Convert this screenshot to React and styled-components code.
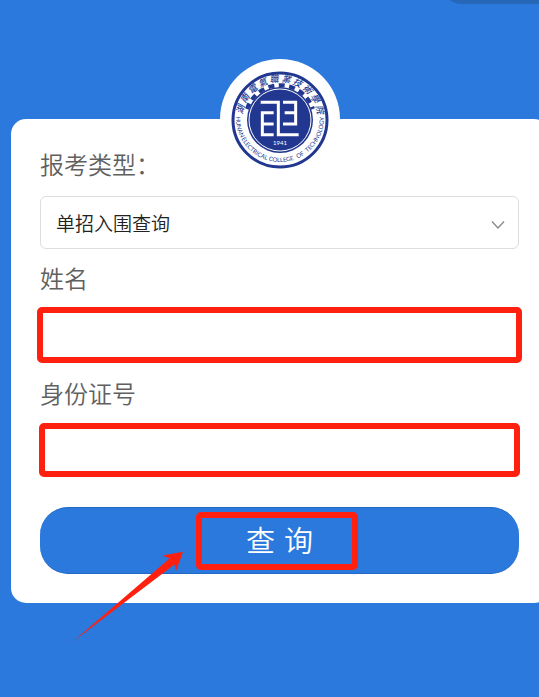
import React, { useState } from "react";
import styled, { createGlobalStyle } from "styled-components";

const blue = "#2b79dc";
const red = "#ff2010";
const navy = "#22378f";

const GlobalStyle = createGlobalStyle`
  *, *::before, *::after { box-sizing: border-box; }
  body {
    margin: 0;
    background: ${blue};
    font-family: "Noto Sans CJK SC", sans-serif;
  }
  button, input, select { font-family: inherit; }
`;

const Page = styled.main`
  position: relative;
  display: flow-root;
  min-height: 100vh;
  overflow: hidden;
  background: ${blue};
`;

const Capsule = styled.div`
  position: absolute;
  top: -38px;
  right: -30px;
  width: 128px;
  height: 42px;
  border-radius: 21px;
  background: #2767b8;
`;

const Card = styled.section`
  position: relative;
  margin: 119px -10px 94px 11px;
  padding: 27px 30px 29px 29px;
  border-radius: 15px;
  background: #fff;
`;

const Badge = styled.div`
  position: absolute;
  top: -60px;
  left: 50%;
  width: 120px;
  height: 120px;
  margin-left: -60px;
  border-radius: 50%;
  background: #fff;

  svg { display: block; }
`;

const Form = styled.form`
  display: flex;
  flex-direction: column;
`;

const Label = styled.label`
  height: 36px;
  color: #606060;
  font-size: 24px;
  font-weight: 350;
  line-height: 36px;
`;

const SelectBox = styled.div`
  position: relative;
  margin: 14px 0 11px;

  svg {
    position: absolute;
    top: 24px;
    right: 14px;
    pointer-events: none;
  }
`;

const Select = styled.select`
  display: block;
  width: 100%;
  height: 53px;
  padding: 0 40px 0 15px;
  border: 1px solid #ddd;
  border-radius: 6px;
  background: #fff;
  color: #222;
  font-size: 19px;
  font-weight: 350;
  appearance: none;
`;

const Input = styled.input`
  height: ${(p) => (p.$wide ? "56px" : "54px")};
  margin: ${(p) => (p.$wide ? "11px -3px 12px" : "12px -1px 30px")};
  padding: 0 12px;
  border: 6px solid ${red};
  border-radius: 5px;
  outline: none;
  background: #fff;
  font-size: 19px;
`;

const Submit = styled.button`
  position: relative;
  height: 67px;
  padding: 3px 0 0;
  border: 1px solid #2268c6;
  border-width: 1px 0;
  border-radius: 28px;
  background: ${blue};
  color: #fff;
  font-family: "DejaVu Sans", "Noto Sans CJK SC", sans-serif;
  font-size: 29px;
  font-weight: 350;
  line-height: 44px;
`;

const Highlight = styled.span`
  position: absolute;
  top: 4px;
  left: 50%;
  width: 162px;
  height: 58px;
  margin-left: -84px;
  border: 6px solid ${red};
  border-radius: 5px;
`;

const Arrow = styled.svg`
  position: absolute;
  bottom: -40px;
  left: 60px;
  pointer-events: none;
`;

const SealText = styled.text`
  fill: ${navy};
  font-family: ${(p) => (p.$latin ? '"Lato", sans-serif' : '"Noto Sans CJK TC", serif')};
  font-size: ${(p) => (p.$latin ? "6px" : "9px")};
  font-weight: ${(p) => (p.$latin ? 400 : 500)};
  font-style: ${(p) => (p.$latin ? "normal" : "italic")};
`;

const YearText = styled.text`
  fill: #fff;
  font-family: "Lato", sans-serif;
  font-size: 6px;
`;

const sealName = [..."湖南電氣職業技術學院"];

const sealWords = [
  ["HUNAN", "7%"],
  ["ELECTRICAL", "28%"],
  ["COLLEGE", "51%"],
  ["OF", "66%"],
  ["TECHNOLOGY", "86%"],
];

function Seal() {
  return (
    <svg width="120" height="120" viewBox="0 0 120 120" role="img" aria-label="湖南電氣職業技術學院">
      <circle cx="60" cy="61" r="47" fill="#fff" stroke={navy} strokeWidth="3" />
      <circle cx="60" cy="61" r="33" fill={navy} />
      <circle cx="60" cy="61" r="31" fill="none" stroke="#fff" strokeWidth="1" />
      <path d="M27 50A34.800 34.800 0 0 1 93 50" fill="none" stroke={navy} strokeWidth="4" strokeDasharray="6 4.500" />
      {sealName.map((char, i) => (
        <SealText key={char} x="60" y="23" textAnchor="middle" transform={`rotate(${-75 + i * 16.7} 60 61)`}>
          {char}
        </SealText>
      ))}
      <path id="seal-arc" d="M16 59A44 44 0 1 0 104 59" fill="none" />
      {sealWords.map(([word, offset]) => (
        <SealText key={word} $latin textAnchor="middle">
          <textPath href="#seal-arc" startOffset={offset}>{word}</textPath>
        </SealText>
      ))}
      <g transform="translate(36 37) scale(.3333)" fill="none" stroke="#fff" strokeWidth="9">
        <path d="M14 19H67V116H128" />
        <path d="M53 50H19V116H53M19 84H53" />
        <path d="M81 19H119V84H81M119 50H86" />
      </g>
      <YearText x="60" y="86" textAnchor="middle">1941</YearText>
    </svg>
  );
}

export default function App() {
  const [name, setName] = useState("");
  const [idNumber, setIdNumber] = useState("");

  return (
    <>
      <GlobalStyle />
      <Page>
        <Capsule aria-hidden="true" />
        <Card>
          <Badge>
            <Seal />
          </Badge>
          <Form onSubmit={(e) => e.preventDefault()}>
            <Label htmlFor="type">报考类型：</Label>
            <SelectBox>
              <Select id="type" defaultValue="entry">
                <option value="entry">单招入围查询</option>
              </Select>
              <svg width="14" height="10" viewBox="0 0 14 10" fill="none" stroke="#888" strokeWidth="1.3" aria-hidden="true">
                <path d="M1 1.5L7 8L13 1.5" />
              </svg>
            </SelectBox>
            <Label htmlFor="name">姓名</Label>
            <Input id="name" $wide value={name} onChange={(e) => setName(e.target.value)} />
            <Label htmlFor="id-number">身份证号</Label>
            <Input id="id-number" value={idNumber} onChange={(e) => setIdNumber(e.target.value)} />
            <Submit type="submit">
              查 询
              <Highlight aria-hidden="true" />
            </Submit>
          </Form>
          <Arrow width="114" height="94" viewBox="0 0 114 94" aria-hidden="true">
            <path d="M2 92.500L98.500 9.500L91.500 6.500L112 2.700L105 22L103.500 15.500Z" fill={red} />
          </Arrow>
        </Card>
      </Page>
    </>
  );
}
